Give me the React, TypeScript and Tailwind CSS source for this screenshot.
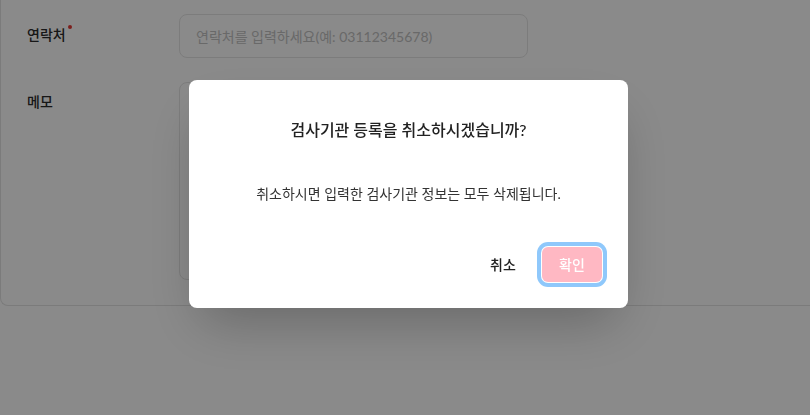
import { useState } from 'react';

const FONT = { fontFamily: '"Lato", "Noto Sans CJK KR", sans-serif' };

function FormCard() {
  const [phone, setPhone] = useState('');
  const [memo, setMemo] = useState('');

  return (
    <div className="w-full bg-white border-l border-b border-[#e3e3e3] rounded-bl-lg pt-[14px] pb-[25px] pl-[26px] flex flex-col gap-[24px]">
      <div className="flex items-center">
        <div className="w-[152px] flex items-start text-[14px] font-medium text-[#2b2b2b] -mt-[3px]">
          <span>연락처</span>
          <span className="w-[4px] h-[4px] rounded-full bg-[#e53935] mt-[1px] ml-[2px]"></span>
        </div>
        <input
          value={phone}
          onChange={(e) => setPhone(e.target.value)}
          placeholder="연락처를 입력하세요(예: 03112345678)"
          className="w-[349px] h-[44px] rounded-lg border border-[#e6e6e6] px-[16px] text-[14px] text-[#333] placeholder:text-[#c2c2c2] outline-none"
        />
      </div>
      <div className="flex items-start">
        <div className="w-[152px] pt-[9px] text-[14px] font-medium text-[#2b2b2b]">메모</div>
        <textarea
          value={memo}
          onChange={(e) => setMemo(e.target.value)}
          className="w-[349px] h-[198px] rounded-lg border border-[#e6e6e6] px-[16px] py-[12px] text-[14px] resize-none outline-none"
        />
      </div>
    </div>
  );
}

function ConfirmDialog() {
  return (
    <div className="fixed inset-0 bg-black/[0.46] flex justify-center items-start pt-[80px] pl-[7px]">
      <div className="w-[439px] h-[228px] bg-white rounded-lg shadow-2xl flex flex-col items-center pt-[39px] pb-[26px] pr-[26px]">
        <div className="text-[16px]/[22px] font-medium text-[#222] pl-[26px]">
          검사기관 등록을 취소하시겠습니까?
        </div>
        <div className="mt-[43px] text-[14px]/[20px] text-[#333] pl-[26px]">
          취소하시면 입력한 검사기관 정보는 모두 삭제됩니다.
        </div>
        <div className="mt-auto self-end flex items-center gap-[11px]">
          <button className="w-[56px] h-[35px] text-[14px] font-medium text-[#222]">취소</button>
          <button className="w-[60px] h-[35px] rounded-md bg-[#ffb8c3] text-white text-[14px] font-medium ring-4 ring-[#8fc8fb] ring-offset-1">
            확인
          </button>
        </div>
      </div>
    </div>
  );
}

export default function App() {
  return (
    <div className="min-h-screen bg-white" style={FONT}>
      <FormCard />
      <ConfirmDialog />
    </div>
  );
}
